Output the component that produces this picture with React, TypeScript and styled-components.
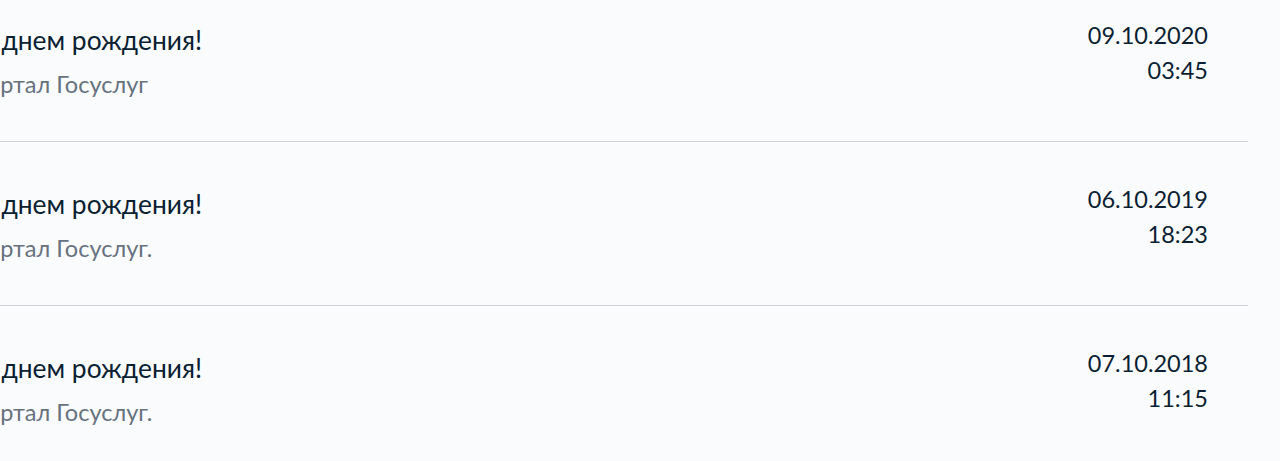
import styled, { createGlobalStyle } from "styled-components";

const GlobalStyle = createGlobalStyle`
    html, body {
        margin: 0;
        padding: 0;
        background: #fafbfd;
    }
    body {
        font-family: Lato, "Noto Sans", sans-serif;
        color: #0b1f33;
    }
`;

const notices = [
    { title: "С днем рождения!", from: "Портал Госуслуг", date: "09.10.2020", time: "03:45" },
    { title: "С днем рождения!", from: "Портал Госуслуг.", date: "06.10.2019", time: "18:23" },
    { title: "С днем рождения!", from: "Портал Госуслуг.", date: "07.10.2018", time: "11:15" },
];

export default function App() {
    return (
        <>
            <GlobalStyle />
            <Viewport>
                <List>
                    {notices.map((n, i) => (
                        <Row key={i} $last={i === notices.length - 1}>
                            <Info>
                                <Title>{n.title}</Title>
                                <From>{n.from}</From>
                            </Info>
                            <When>
                                <span>{n.date}</span>
                                <span>{n.time}</span>
                            </When>
                        </Row>
                    ))}
                </List>
            </Viewport>
        </>
    );
}

const Viewport = styled.div`
    width: 1280px;
    height: 461px;
    overflow: hidden;
`;

// the screenshot is a crop of a wider feed, so the list is pulled up and left
const List = styled.ul`
    list-style: none;
    margin: -22px 0 0 -23px;
    padding: 0;
    width: 1271px;
`;

const Row = styled.li<{ $last?: boolean }>`
    display: flex;
    justify-content: space-between;
    align-items: flex-start;
    padding: 44px 40px 42px 0;
    border-bottom: ${(p) => (p.$last ? "none" : "1px solid #cfd3d9")};
`;

const Info = styled.div`
    display: flex;
    flex-direction: column;
    gap: 11px;
`;

const Title = styled.div`
    font-size: 26.4px;
    line-height: 36px;
    color: #0b1f33;
`;

const From = styled.div`
    margin-left: -7px;
    font-size: 23.5px;
    line-height: 30px;
    color: #66727f;
`;

const When = styled.div`
    display: flex;
    flex-direction: column;
    align-items: flex-end;
    gap: 5px;
    margin-top: -2px;
    font-size: 23.5px;
    line-height: 30px;
    color: #0b1f33;
`;
